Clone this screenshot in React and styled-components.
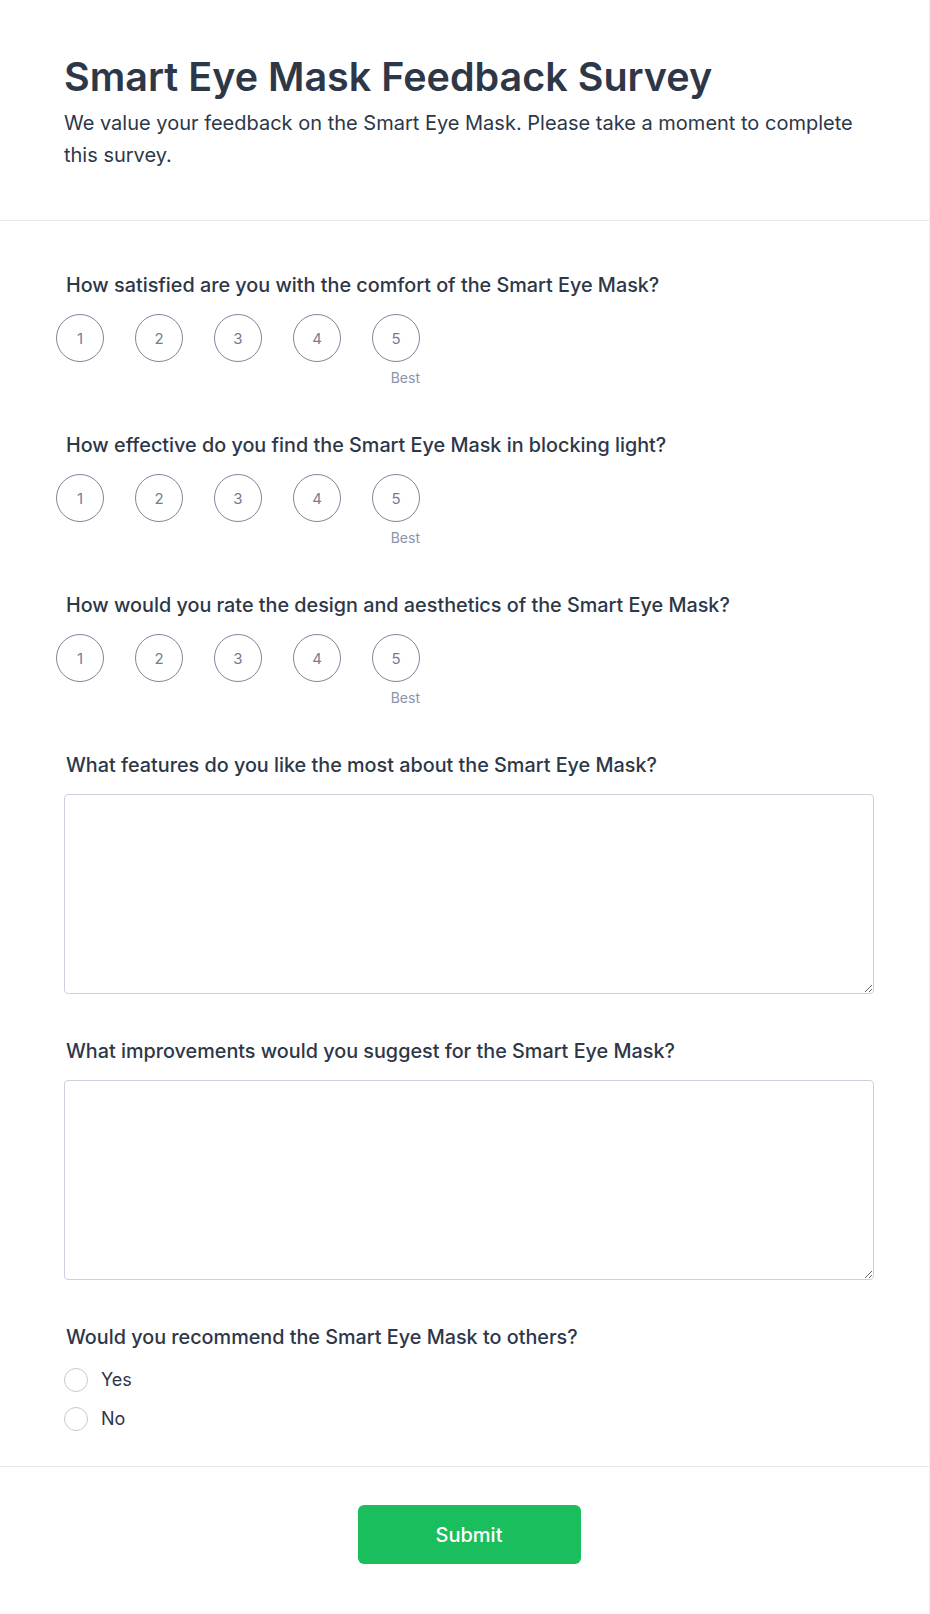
import React, { useState } from 'react';
import styled, { createGlobalStyle } from 'styled-components';

const GlobalStyle = createGlobalStyle`
  * { box-sizing: border-box; }
  body {
    margin: 0;
    background: #fff;
    font-family: Inter, "Noto Sans", "Liberation Sans", sans-serif;
    color: #2d3748;
  }
`;

const Card = styled.div`
  width: 930px;
  min-height: 1614px;
  background: #fff;
  border-right: 1px solid #f1f2f6;
`;

const Header = styled.header`
  padding: 53px 55px 49px 64px;
  border-bottom: 1px solid #e2e8f0;
`;

const Title = styled.h1`
  margin: 0;
  font-size: 39.5px;
  line-height: 48px;
  font-weight: 600;
  color: #2d3748;
`;

const Subtitle = styled.p`
  margin: 6px 0 0;
  font-size: 20px;
  line-height: 32px;
  font-weight: 400;
  color: #2d3748;
`;

const Body = styled.div`
  display: flex;
  flex-direction: column;
  gap: 43px;
  padding: 50px 55px 35px 64px;
`;

const Section = styled.section`
  display: flex;
  flex-direction: column;
`;

const Label = styled.div`
  padding-left: 2px;
  font-size: 19.8px;
  line-height: 28px;
  font-weight: 500;
  color: #2d3748;
  margin-bottom: 15px;
`;

const Ratings = styled.div`
  display: flex;
  gap: 31px;
  margin-left: -8px;
`;

const RatingCell = styled.div`
  display: flex;
  flex-direction: column;
  align-items: flex-end;
`;

const Circle = styled.button`
  width: 48px;
  height: 48px;
  border-radius: 50%;
  border: 1px solid #7c869b;
  background: ${({ $active }) => ($active ? '#edf2f7' : '#fff')};
  color: #718096;
  font-family: inherit;
  font-size: 15px;
  padding: 0;
  cursor: pointer;
`;

const Hint = styled.span`
  margin-top: 6px;
  font-size: 14px;
  line-height: 20px;
  color: #8a94a8;
`;

const TextArea = styled.textarea`
  display: block;
  width: 100%;
  height: 200px;
  border: 1px solid #cbd0dc;
  border-radius: 4px;
  padding: 10px 12px;
  font-family: inherit;
  font-size: 16px;
  color: #2d3748;
  outline: none;
`;

const Options = styled.div`
  display: flex;
  flex-direction: column;
  gap: 15px;
  margin-top: 2px;
`;

const Option = styled.label`
  display: flex;
  align-items: center;
  gap: 13px;
  font-size: 18px;
  line-height: 24px;
  color: #2d3748;
  cursor: pointer;
`;

const RadioDot = styled.span`
  width: 24px;
  height: 24px;
  border-radius: 50%;
  border: 1px solid #c3c8d4;
  background: ${({ $checked }) => ($checked ? '#19be5d' : '#fff')};
  box-shadow: ${({ $checked }) => ($checked ? 'inset 0 0 0 5px #fff' : 'none')};
`;

const Footer = styled.footer`
  border-top: 1px solid #e2e8f0;
  padding: 38px 55px 49px 64px;
  display: flex;
  justify-content: center;
`;

const SubmitButton = styled.button`
  width: 223px;
  height: 59px;
  border: none;
  border-radius: 6px;
  background: #1abe5d;
  color: #fff;
  font-family: inherit;
  font-size: 20px;
  font-weight: 500;
  cursor: pointer;
`;

const ratingQuestions = [
  'How satisfied are you with the comfort of the Smart Eye Mask?',
  'How effective do you find the Smart Eye Mask in blocking light?',
  'How would you rate the design and aesthetics of the Smart Eye Mask?',
];

const textQuestions = [
  'What features do you like the most about the Smart Eye Mask?',
  'What improvements would you suggest for the Smart Eye Mask?',
];

const RatingQuestion = ({ question, value, onChange }) => (
  <Section>
    <Label>{question}</Label>
    <Ratings>
      {[1, 2, 3, 4, 5].map((n) => (
        <RatingCell key={n}>
          <Circle $active={value === n} onClick={() => onChange(n)}>{n}</Circle>
          {n === 5 && <Hint>Best</Hint>}
        </RatingCell>
      ))}
    </Ratings>
  </Section>
);

const App = () => {
  const [ratings, setRatings] = useState({});
  const [recommend, setRecommend] = useState(null);

  return (
    <>
      <GlobalStyle />
      <Card>
        <Header>
          <Title>Smart Eye Mask Feedback Survey</Title>
          <Subtitle>
            We value your feedback on the Smart Eye Mask. Please take a moment to complete this survey.
          </Subtitle>
        </Header>
        <Body>
          {ratingQuestions.map((q, i) => (
            <RatingQuestion
              key={q}
              question={q}
              value={ratings[i]}
              onChange={(n) => setRatings({ ...ratings, [i]: n })}
            />
          ))}
          {textQuestions.map((q) => (
            <Section key={q}>
              <Label>{q}</Label>
              <TextArea />
            </Section>
          ))}
          <Section>
            <Label>Would you recommend the Smart Eye Mask to others?</Label>
            <Options>
              {['Yes', 'No'].map((opt) => (
                <Option key={opt} onClick={() => setRecommend(opt)}>
                  <RadioDot $checked={recommend === opt} />
                  {opt}
                </Option>
              ))}
            </Options>
          </Section>
        </Body>
        <Footer>
          <SubmitButton>Submit</SubmitButton>
        </Footer>
      </Card>
    </>
  );
};

export default App;
